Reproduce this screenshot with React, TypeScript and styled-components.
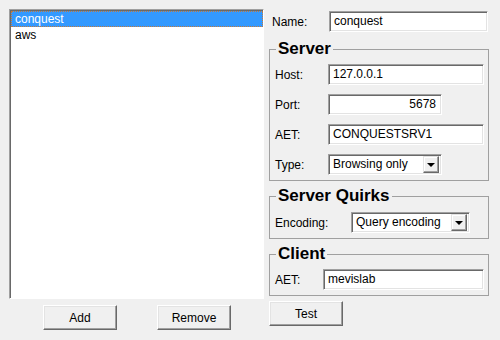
import styled, { createGlobalStyle } from 'styled-components'

/* ── Global ── */
const Global = createGlobalStyle`
  html, body {
    margin: 0;
    padding: 0;
    background: #f0f0f0;
  }
  body {
    font-family: "Liberation Sans", Arial, sans-serif;
    font-size: 12px;
    color: #000;
  }
`

/* ── Styled ── */
const Window = styled.div`
  width: 500px;
  height: 340px;
  box-sizing: border-box;
  padding: 9px 11px 0 9px;
  display: flex;
  gap: 5px;
  background: #f0f0f0;
`

const LeftColumn = styled.div`
  width: 255px;
  display: flex;
  flex-direction: column;
`

const ListBox = styled.div`
  height: 290px;
  box-sizing: border-box;
  background: #fff;
  border: 1px solid;
  border-color: #a0a0a0 #fff #fff #a0a0a0;
  box-shadow: inset 1px 1px 0 #696969;
  padding: 1px 0 0 1px;
`

const ListItem = styled.div<{ $selected?: boolean }>`
  height: 16px;
  box-sizing: border-box;
  line-height: 14px;
  padding-left: 3px;
  border: 1px dotted ${({ $selected }) => ($selected ? '#c47a3c' : 'transparent')};
  background: ${({ $selected }) => ($selected ? '#3399ff' : 'transparent')};
  color: ${({ $selected }) => ($selected ? '#fff' : '#000')};
`

const ButtonRow = styled.div`
  display: flex;
  justify-content: center;
  gap: 40px;
  margin-top: 6px;
  padding-left: 1px;
`

const PushButton = styled.button`
  width: 74px;
  height: 25px;
  box-sizing: border-box;
  margin: 0;
  padding: 0;
  font: inherit;
  color: #000;
  background: #f0f0f0;
  border: 1px solid;
  border-color: #fff #696969 #696969 #fff;
  box-shadow: inset -1px -1px 0 #a0a0a0, inset 1px 1px 0 #e3e3e3;
`

const RightColumn = styled.div`
  width: 220px;
  display: flex;
  flex-direction: column;
  align-items: flex-start;
  padding-top: 2px;
`

const NameRow = styled.div`
  display: flex;
  align-items: center;
  height: 21px;
  padding-left: 3px;
`

const Label = styled.span<{ $width: number }>`
  width: ${({ $width }) => $width}px;
  flex-shrink: 0;
`

const TextField = styled.div<{ $width: number; $align?: 'left' | 'right' }>`
  width: ${({ $width }) => $width}px;
  height: 21px;
  box-sizing: border-box;
  background: #fff;
  border: 1px solid;
  border-color: #a0a0a0 #fff #fff #a0a0a0;
  box-shadow: inset 1px 1px 0 #696969, inset -1px -1px 0 #e3e3e3;
  padding: 0 5px 0 4px;
  line-height: 19px;
  text-align: ${({ $align }) => $align ?? 'left'};
`

const Combo = styled.div<{ $width: number }>`
  width: ${({ $width }) => $width}px;
  height: 21px;
  box-sizing: border-box;
  display: flex;
  align-items: center;
  background: #fff;
  border: 1px solid;
  border-color: #a0a0a0 #fff #fff #a0a0a0;
  box-shadow: inset 1px 1px 0 #696969, inset -1px -1px 0 #e3e3e3;
  padding: 2px;
`

const ComboText = styled.span`
  flex: 1;
  padding-left: 2px;
  line-height: 17px;
`

const ComboButton = styled.span`
  width: 16px;
  height: 17px;
  box-sizing: border-box;
  display: flex;
  align-items: center;
  justify-content: center;
  background: #f0f0f0;
  border: 1px solid;
  border-color: #e3e3e3 #696969 #696969 #e3e3e3;
  box-shadow: inset -1px -1px 0 #a0a0a0, inset 1px 1px 0 #fff;
`

const Arrow = styled.span`
  width: 0;
  height: 0;
  border-left: 4px solid transparent;
  border-right: 4px solid transparent;
  border-top: 4px solid #000;
  margin-top: 1px;
`

const GroupBox = styled.fieldset<{ $top: number; $padTop: number }>`
  width: 220px;
  box-sizing: border-box;
  margin: ${({ $top }) => $top}px 0 0;
  padding: ${({ $padTop }) => $padTop}px 4px 5px 5px;
  border: 1px solid #a0a0a0;
  display: flex;
  flex-direction: column;
  gap: 9px;
  min-width: 0;
`

const GroupTitle = styled.legend`
  font-size: 17px;
  font-weight: bold;
  line-height: 18px;
  padding: 0 2px;
  margin-left: 1px;
`

const FieldRow = styled.div`
  display: flex;
  align-items: center;
  height: 21px;
`

const TestButton = styled(PushButton)`
  margin-top: 5px;
`

/* ── Component ── */
export default function App() {
  return (
    <>
      <Global />
      <Window>
        <LeftColumn>
          <ListBox>
            <ListItem $selected>conquest</ListItem>
            <ListItem>aws</ListItem>
          </ListBox>
          <ButtonRow>
            <PushButton>Add</PushButton>
            <PushButton>Remove</PushButton>
          </ButtonRow>
        </LeftColumn>

        <RightColumn>
          <NameRow>
            <Label $width={57}>Name:</Label>
            <TextField $width={159}>conquest</TextField>
          </NameRow>

          <GroupBox $top={8} $padTop={6}>
            <GroupTitle>Server</GroupTitle>
            <FieldRow>
              <Label $width={53}>Host:</Label>
              <TextField $width={156}>127.0.0.1</TextField>
            </FieldRow>
            <FieldRow>
              <Label $width={53}>Port:</Label>
              <TextField $width={114} $align="right">5678</TextField>
            </FieldRow>
            <FieldRow>
              <Label $width={53}>AET:</Label>
              <TextField $width={156}>CONQUESTSRV1</TextField>
            </FieldRow>
            <FieldRow>
              <Label $width={53}>Type:</Label>
              <Combo $width={114}>
                <ComboText>Browsing only</ComboText>
                <ComboButton><Arrow /></ComboButton>
              </Combo>
            </FieldRow>
          </GroupBox>

          <GroupBox $top={6} $padTop={7}>
            <GroupTitle>Server Quirks</GroupTitle>
            <FieldRow>
              <Label $width={76}>Encoding:</Label>
              <Combo $width={119}>
                <ComboText>Query encoding</ComboText>
                <ComboButton><Arrow /></ComboButton>
              </Combo>
            </FieldRow>
          </GroupBox>

          <GroupBox $top={6} $padTop={6}>
            <GroupTitle>Client</GroupTitle>
            <FieldRow>
              <Label $width={48}>AET:</Label>
              <TextField $width={161}>mevislab</TextField>
            </FieldRow>
          </GroupBox>

          <TestButton>Test</TestButton>
        </RightColumn>
      </Window>
    </>
  )
}
